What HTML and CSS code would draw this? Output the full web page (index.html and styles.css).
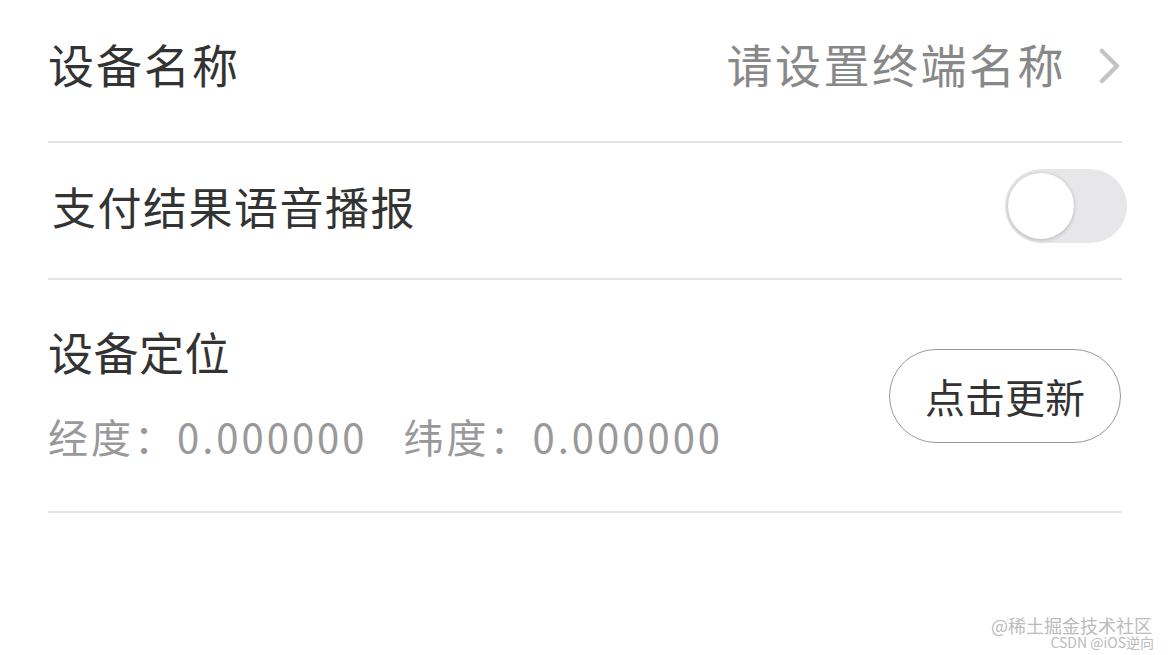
FILE: index.html
```html
<!DOCTYPE html>
<html lang="zh-CN">
<head>
<meta charset="utf-8">
<link rel="stylesheet" href="styles.css">
</head>
<body>
<div class="list">
  <div class="row row-name">
    <span class="title">设备名称</span>
    <span class="value">请设置终端名称
      <svg class="chev" width="24" height="36" viewBox="0 0 24 36"><path d="M4 3 L19 18 L4 33" fill="none" stroke="#c4c4c4" stroke-width="4.5" stroke-linecap="round" stroke-linejoin="round"/></svg>
    </span>
  </div>
  <div class="row row-voice">
    <span class="title">支付结果语音播报</span>
    <div class="toggle"><div class="knob"></div></div>
  </div>
  <div class="row row-loc">
    <div class="loc">
      <div class="title">设备定位</div>
      <div class="coords"><span>经度：0.000000</span><span>纬度：0.000000</span></div>
    </div>
    <button class="btn">点击更新</button>
  </div>
</div>
<div class="watermark">
  <div class="wm1">@稀土掘金技术社区</div>
  <div class="wm2">CSDN @iOS逆向</div>
</div>
</body>
</html>
```
FILE: styles.css
```css
html, body { margin: 0; padding: 0; background: #fff; }
body {
  width: 1170px; height: 655px; position: relative; overflow: hidden;
  font-family: "Noto Sans CJK SC", "Noto Sans", sans-serif;
  color: #333;
}
.list { margin: 0 48px; }
.row {
  display: flex; align-items: center; justify-content: space-between;
  border-bottom: 2px solid #e4e4e4;
  box-sizing: border-box;
}
.title { font-size: 45px; color: #333; line-height: 1; }
.row-name { height: 143px; padding-bottom: 16px; }
.row-name .title { font-size: 46px; letter-spacing: 2px; }
.value {
  display: flex; align-items: center; gap: 32px;
  font-size: 46px; color: #888; line-height: 1; letter-spacing: 2.5px;
}
.chev { margin-top: 6px; }
.row-voice { height: 135px; padding-left: 4px; padding-bottom: 10px; margin-right: -5px; border-bottom: none; }
.row-voice .title { font-size: 44px; letter-spacing: 1.5px; }
.row-voice + .row { border-top: 2px solid #e4e4e4; }
.toggle {
  width: 122px; height: 74px; border-radius: 37px;
  background: #e7e7e9; display: flex; align-items: center; padding-left: 3px;
  box-sizing: border-box;
}
.knob {
  width: 66px; height: 66px; border-radius: 50%; background: #fff;
  box-shadow: 0 1px 4px rgba(0,0,0,0.22);
}
.row-loc { height: 235px; padding-bottom: 4px; }
.loc { display: flex; flex-direction: column; gap: 42px; margin-top: -2px; }
.loc .title { letter-spacing: 0.5px; }
.coords { display: flex; gap: 36px; font-size: 40px; color: #999; line-height: 1; letter-spacing: 3px; }
.btn {
  width: 232px; height: 94px; border-radius: 47px;
  border: 1.5px solid #999; background: #fff;
  font-family: inherit; font-size: 40px; color: #333;
  margin-right: 1px; margin-top: 4px; padding: 0;
}
.watermark {
  position: absolute; right: 16px; bottom: 6px;
  display: flex; flex-direction: column; align-items: flex-end; gap: 1px;
  color: #bbb;
  font-family: "Noto Sans CJK SC", "Liberation Sans", sans-serif;
}
.wm1 { font-size: 18px; line-height: 18px; margin-right: 2px; }
.wm2 { font-size: 14px; line-height: 14px; }
```
